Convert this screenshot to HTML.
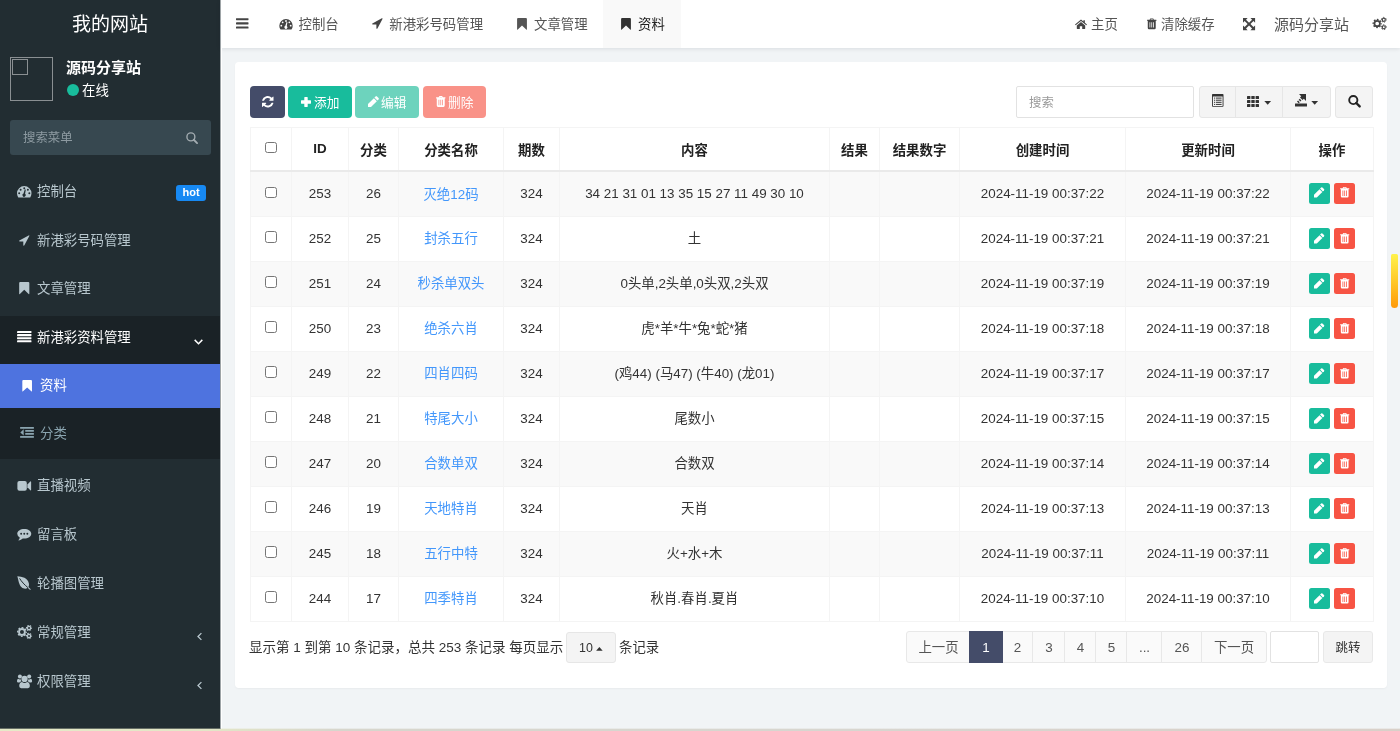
<!DOCTYPE html>
<html lang="zh-CN">
<head>
<meta charset="utf-8">
<title>我的网站</title>
<style>
*{box-sizing:border-box;}
html,body{margin:0;padding:0;}
body{width:1400px;height:731px;overflow:hidden;background:#f1f4f6;font-family:"Liberation Sans","Noto Sans CJK SC",sans-serif;font-size:13.4px;color:#333;position:relative;}
svg{display:block;position:absolute;overflow:visible;}
a{text-decoration:none;color:inherit;}
.abs{position:absolute;white-space:nowrap;}
#side{position:absolute;left:0;top:0;width:220px;height:729px;background:#222d32;color:#b8c7ce;}
#logo{position:absolute;left:0;top:0;width:220px;height:48px;line-height:50px;text-align:center;color:#fff;font-size:19px;}
#avatar{position:absolute;left:10px;top:57px;width:43px;height:44px;border:1px solid #8a8f92;}
#avatar i{position:absolute;left:1px;top:1px;width:16px;height:16px;border:1px solid #8a8f92;display:block;}
#msearch{position:absolute;left:10px;top:120px;width:201px;height:35px;background:#374850;border-radius:3px;color:#8d9aa1;font-size:12.4px;line-height:36px;padding-left:13px;}
.mi{position:absolute;left:0;width:220px;height:20px;line-height:20px;font-size:13.4px;white-space:nowrap;}
.mi span.t{position:absolute;left:37px;top:1px;}
.badge{position:absolute;left:176px;top:184.7px;width:30px;background:#1789f3;color:#fff;font-size:11px;font-weight:bold;line-height:15px;height:16px;text-align:center;border-radius:3px;}
#head{position:absolute;left:220px;top:0;width:1180px;height:48px;background:#fff;box-shadow:0 1px 4px rgba(0,21,41,.10);}
#head .tab{position:absolute;top:0;height:48px;line-height:49px;font-size:13.4px;color:#555;white-space:nowrap;}
#panel{position:absolute;left:235px;top:62px;width:1152px;height:626px;background:#fff;border-radius:4px;box-shadow:0 1px 2px rgba(0,0,0,.04);}
.btn{position:absolute;top:86px;height:32px;border-radius:4px;color:#fff;font-size:12.7px;line-height:35px;white-space:nowrap;}
table{position:absolute;left:250px;top:127px;width:1123px;border-collapse:collapse;table-layout:fixed;font-size:13.4px;}
th,td{border:1px solid #f4f4f4;text-align:center;padding:0;height:45px;white-space:nowrap;overflow:hidden;position:relative;}
th{height:43px;font-weight:bold;color:#222;border-bottom:2px solid #eaeaea;}
tbody tr:nth-child(odd){background:#f9f9f9;}
tbody tr:first-child td{height:46px;}
tbody tr:not(:first-child) td{padding-bottom:2px;}
.c{position:relative;top:-1px;}
td a.l{color:#4397fb;}
.cb{display:inline-block;width:11.5px;height:11.5px;border:1px solid #767676;border-radius:2.5px;background:#fff;vertical-align:middle;position:relative;top:-2px;}
.ob{position:absolute;top:11px;width:21px;height:21px;border-radius:2.5px;}
.tb{position:absolute;top:86px;height:32px;background:#f4f4f4;border:1px solid #e6e6e6;}
.pg{position:absolute;top:631px;height:32px;line-height:30px;border:1px solid #e8e8e8;background:#fafafa;color:#555;text-align:center;font-size:13.4px;}
</style>
</head>
<body>
<div id="root" style="position:absolute;left:0;top:0;width:1400px;height:731px;will-change:transform">
<div id="side">
<div id="logo">我的网站</div>
<div id="avatar"><i></i></div>
<div class="abs" style="left:66px;top:58px;color:#fff;font-weight:bold;font-size:15px;line-height:20px">源码分享站</div>
<div class="abs" style="left:67px;top:84px;width:12px;height:12px;border-radius:50%;background:#18bc9c"></div>
<div class="abs" style="left:82px;top:81px;color:#fff;font-size:13.4px;line-height:20px">在线</div>
<div id="msearch">搜索菜单<svg viewBox="0 0 13 13" width="12" height="12" fill="currentColor" style="color:#a3acb1;left:176px;top:11.7px"><circle cx="5.3" cy="5.3" r="4.3" fill="none" stroke="currentColor" stroke-width="1.5"/><path d="M8.4 8.4L12 12" stroke="currentColor" stroke-width="2.0" stroke-linecap="round"/></svg></div>
<div class="abs" style="left:0;top:316px;width:220px;height:143px;background:#1a2226"></div>
<div class="abs" style="left:0;top:363.5px;width:220px;height:44.5px;background:#4e73df"></div>
<div class="mi" style="top:181px;color:#b8c7ce"><svg viewBox="0 0 14 11" width="14.5" height="11.5" fill="#b8c7ce" style="left:16.8px;top:5px"><path fill-rule="evenodd" d="M0 7A7 7 0 0 1 14 7C14 8.4 13.6 9.7 12.9 10.7Q12.7 11 12.4 11H1.6Q1.3 11 1.1 10.7C.4 9.7 0 8.4 0 7zM1.15 7.00a0.95 0.95 0 1 0 1.90 0a0.95 0.95 0 1 0 -1.90 0zM2.55 3.50a0.95 0.95 0 1 0 1.90 0a0.95 0.95 0 1 0 -1.90 0zM6.05 2.10a0.95 0.95 0 1 0 1.90 0a0.95 0.95 0 1 0 -1.90 0zM9.55 3.50a0.95 0.95 0 1 0 1.90 0a0.95 0.95 0 1 0 -1.90 0zM10.95 7.00a0.95 0.95 0 1 0 1.90 0a0.95 0.95 0 1 0 -1.90 0zM6.3 7.2L7.6 3.2L8.5 3.5L7.8 7.4A1.6 1.6 0 1 1 6.3 7.2z"/></svg><span class="t" style="left:37px">控制台</span></div>
<div class="badge">hot</div>
<div class="mi" style="top:230px;color:#b8c7ce"><svg viewBox="0 0 11 11" width="10.5" height="11" fill="#b8c7ce" style="left:18.8px;top:4.5px"><path d="M10.8 .9L5.6 10.6Q5.3 11.1 4.9 10.9Q4.5 10.8 4.5 10.3V6.5H.7Q.2 6.5 .1 6.1Q0 5.7 .4 5.5L10.1 .2Q10.6 0 10.8 .3Q11 .5 10.8 .9z"/></svg><span class="t" style="left:37px">新港彩号码管理</span></div>
<div class="mi" style="top:278px;color:#b8c7ce"><svg viewBox="0 0 10 12" width="10.5" height="12.2" fill="#b8c7ce" style="left:19px;top:4px"><path d="M1 0H9Q10 0 10 1V11.4Q10 12.3 9.3 11.7L5 7.7L.7 11.7Q0 12.3 0 11.4V1Q0 0 1 0z"/></svg><span class="t" style="left:37px">文章管理</span></div>
<div class="mi" style="top:327px;color:#fff"><svg viewBox="0 0 14 11" width="14.5" height="11.3" fill="#fff" style="left:16.8px;top:4px"><rect x="0" y="0" width="14" height="2" rx=".4"/><rect x="0" y="3" width="14" height="2" rx=".4"/><rect x="0" y="6" width="14" height="2" rx=".4"/><rect x="0" y="9" width="14" height="2" rx=".4"/></svg><span class="t" style="left:37px">新港彩资料管理</span></div>
<svg viewBox="0 0 8 5" width="9" height="6" fill="currentColor" style="color:#fff;left:194px;top:339px"><path d="M.6 .6L4 4L7.4 .6" fill="none" stroke="currentColor" stroke-width="1.3"/></svg>
<div class="mi" style="top:375px;color:#fff"><svg viewBox="0 0 10 12" width="10.3" height="11.6" fill="#fff" style="left:22px;top:4.6px"><path d="M1 0H9Q10 0 10 1V11.4Q10 12.3 9.3 11.7L5 7.7L.7 11.7Q0 12.3 0 11.4V1Q0 0 1 0z"/></svg><span class="t" style="left:40px">资料</span></div>
<div class="mi" style="top:423px;color:#8aa4af"><svg viewBox="0 0 14 11" width="14" height="10.8" fill="#8aa4af" style="left:19.8px;top:4.4px"><rect x="0" y="0" width="14" height="1.8"/><rect x="5.2" y="3.05" width="8.8" height="1.8"/><rect x="5.2" y="6.1" width="8.8" height="1.8"/><rect x="0" y="9.2" width="14" height="1.8"/><path d="M3.6 2.4V8.6L.2 5.5z"/></svg><span class="t" style="left:40px">分类</span></div>
<div class="mi" style="top:475px;color:#b8c7ce"><svg viewBox="0 0 14 10" width="14.5" height="9.8" fill="#b8c7ce" style="left:16.8px;top:5.7px"><rect x="0" y="0" width="9.6" height="10" rx="2"/><path d="M10.2 3.6L13.2 .6Q14 0 14 1V9Q14 10 13.2 9.4L10.2 6.4z"/></svg><span class="t" style="left:37px">直播视频</span></div>
<div class="mi" style="top:524px;color:#b8c7ce"><svg viewBox="0 0 14 11.5" width="14.5" height="11.5" fill="#b8c7ce" style="left:16.8px;top:5.3px"><path fill-rule="evenodd" d="M7 0C10.9 0 14 2.1 14 4.8S10.9 9.6 7 9.6Q6.2 9.6 5.5 9.5Q3.8 11 1.6 11.4Q1.1 11.5 1.3 11.1Q2.3 10 2.5 8.5Q0 7.1 0 4.8C0 2.1 3.1 0 7 0zM2.95 4.80a0.95 0.95 0 1 0 1.90 0a0.95 0.95 0 1 0 -1.90 0zM6.05 4.80a0.95 0.95 0 1 0 1.90 0a0.95 0.95 0 1 0 -1.90 0zM9.15 4.80a0.95 0.95 0 1 0 1.90 0a0.95 0.95 0 1 0 -1.90 0z"/></svg><span class="t" style="left:37px">留言板</span></div>
<div class="mi" style="top:573px;color:#b8c7ce"><svg viewBox="0 0 14 14" width="14" height="14" fill="#b8c7ce" style="left:17px;top:2.7px"><path d="M.3 .2C5 .4 10.8 1.8 11.9 7.4C12.2 9 11.9 10.2 11.3 11.1L13.8 13.3L13.1 14L10.7 11.8C9 13.1 6.4 12.9 4.6 11.2C1.7 8.4 1.6 4 .3 .2z"/><path d="M2.6 2.4C4.5 5.6 7.3 8.6 10.9 11.6" stroke="#222d32" stroke-width="1" fill="none"/></svg><span class="t" style="left:37px">轮播图管理</span></div>
<div class="mi" style="top:622px;color:#b8c7ce"><svg viewBox="0 0 15.2 14" width="15.1" height="13.9" style="color:#b8c7ce;left:16.8px;top:3px"><circle cx="5" cy="7" r="2.95" fill="none" stroke="currentColor" stroke-width="1.9"/><circle cx="5" cy="7" r="4.3500000000000005" fill="none" stroke="currentColor" stroke-width="1.3" stroke-dasharray="1.900 1.516" stroke-dashoffset="0.950"/><circle cx="12.1" cy="3" r="1.625" fill="none" stroke="currentColor" stroke-width="1.25"/><circle cx="12.1" cy="3" r="2.5749999999999997" fill="none" stroke="currentColor" stroke-width="1.05" stroke-dasharray="1.600 1.097" stroke-dashoffset="0.800"/><circle cx="12.1" cy="11" r="1.625" fill="none" stroke="currentColor" stroke-width="1.25"/><circle cx="12.1" cy="11" r="2.5749999999999997" fill="none" stroke="currentColor" stroke-width="1.05" stroke-dasharray="1.600 1.097" stroke-dashoffset="0.800"/></svg><span class="t" style="left:37px">常规管理</span></div>
<svg viewBox="0 0 5 8" width="5" height="9" fill="currentColor" style="color:#b8c7ce;left:196.5px;top:631.5px"><path d="M4.4 .6L1 4L4.4 7.4" fill="none" stroke="currentColor" stroke-width="1.3"/></svg>
<div class="mi" style="top:671px;color:#b8c7ce"><svg viewBox="0 0 15 14" width="15.1" height="14.2" fill="#b8c7ce" style="left:16.8px;top:2.6px"><circle cx="7.5" cy="4.9" r="3.1"/><path d="M2.2 11.9C2.2 9.2 3.6 7.9 5 7.9Q6.1 8.9 7.5 8.9Q8.9 8.9 10 7.9C11.4 7.9 12.8 9.2 12.8 11.9Q12.8 14 10.9 14H4.1Q2.2 14 2.2 11.9z"/><circle cx="2.9" cy="2.4" r="2"/><circle cx="12.1" cy="2.4" r="2"/><path d="M0 7.3C0 5.5 .6 4.7 1.2 4.7Q2 5.3 2.9 5.3Q3.5 5.3 3.9 5.1Q3.8 6.3 4.4 7.3Q3.2 7.4 2.5 8.4H1.3Q0 8.4 0 7.3z"/><path d="M15 7.3C15 5.5 14.4 4.7 13.8 4.7Q13 5.3 12.1 5.3Q11.5 5.3 11.1 5.1Q11.2 6.3 10.6 7.3Q11.8 7.4 12.5 8.4H13.7Q15 8.4 15 7.3z"/></svg><span class="t" style="left:37px">权限管理</span></div>
<svg viewBox="0 0 5 8" width="5" height="9" fill="currentColor" style="color:#b8c7ce;left:196.5px;top:680.5px"><path d="M4.4 .6L1 4L4.4 7.4" fill="none" stroke="currentColor" stroke-width="1.3"/></svg>
</div>
<div id="head">
<svg viewBox="0 0 12 10" width="12.5" height="10.7" fill="#444" style="left:15.7px;top:17.9px"><rect x="0" y="0" width="12" height="2" rx=".4"/><rect x="0" y="4" width="12" height="2" rx=".4"/><rect x="0" y="8" width="12" height="2" rx=".4"/></svg>
<div class="tab" style="left:78.6px">控制台</div><svg viewBox="0 0 14 11" width="14" height="10.5" fill="#444" style="left:59.3px;top:19.2px"><path fill-rule="evenodd" d="M0 7A7 7 0 0 1 14 7C14 8.4 13.6 9.7 12.9 10.7Q12.7 11 12.4 11H1.6Q1.3 11 1.1 10.7C.4 9.7 0 8.4 0 7zM1.15 7.00a0.95 0.95 0 1 0 1.90 0a0.95 0.95 0 1 0 -1.90 0zM2.55 3.50a0.95 0.95 0 1 0 1.90 0a0.95 0.95 0 1 0 -1.90 0zM6.05 2.10a0.95 0.95 0 1 0 1.90 0a0.95 0.95 0 1 0 -1.90 0zM9.55 3.50a0.95 0.95 0 1 0 1.90 0a0.95 0.95 0 1 0 -1.90 0zM10.95 7.00a0.95 0.95 0 1 0 1.90 0a0.95 0.95 0 1 0 -1.90 0zM6.3 7.2L7.6 3.2L8.5 3.5L7.8 7.4A1.6 1.6 0 1 1 6.3 7.2z"/></svg>
<div class="tab" style="left:169.3px">新港彩号码管理</div><svg viewBox="0 0 11 11" width="10.7" height="11" fill="#444" style="left:151.8px;top:18px"><path d="M10.8 .9L5.6 10.6Q5.3 11.1 4.9 10.9Q4.5 10.8 4.5 10.3V6.5H.7Q.2 6.5 .1 6.1Q0 5.7 .4 5.5L10.1 .2Q10.6 0 10.8 .3Q11 .5 10.8 .9z"/></svg>
<div class="tab" style="left:314px">文章管理</div><svg viewBox="0 0 10 12" width="10" height="11.8" fill="#555" style="left:297px;top:17.5px"><path d="M1 0H9Q10 0 10 1V11.4Q10 12.3 9.3 11.7L5 7.7L.7 11.7Q0 12.3 0 11.4V1Q0 0 1 0z"/></svg>
<div class="tab" style="left:383px;width:78px;background:#f9f9f9"></div><div class="tab" style="left:418px;color:#222">资料</div><svg viewBox="0 0 10 12" width="10" height="11.8" fill="#333" style="left:401.2px;top:17.5px"><path d="M1 0H9Q10 0 10 1V11.4Q10 12.3 9.3 11.7L5 7.7L.7 11.7Q0 12.3 0 11.4V1Q0 0 1 0z"/></svg>
<div class="tab" style="left:871px">主页</div><svg viewBox="0 0 14 11" width="12" height="10.5" fill="#444" style="left:855px;top:18.9px"><path d="M7 0L0 5.8L.8 6.7L7 1.7L13.2 6.7L14 5.8L11.5 3.7V.8H9.8V2.3z"/><path d="M7 2.9L2.1 6.9V10.6Q2.1 11 2.6 11H5.6V7.7H8.4V11H11.4Q11.9 11 11.9 10.6V6.9z"/></svg>
<div class="tab" style="left:941px">清除缓存</div><svg viewBox="0 0 11 12.5" width="9.5" height="11.7" fill="#444" style="left:927px;top:17.7px"><path fill-rule="evenodd" d="M4.1 0H6.9Q7.3 0 7.5 .4L7.9 1.4H10.6Q11 1.4 11 1.8V2.3Q11 2.7 10.6 2.7H10.1V11Q10.1 12.5 8.7 12.5H2.3Q.9 12.5 .9 11V2.7H.4Q0 2.7 0 2.3V1.8Q0 1.4 .4 1.4H3.1L3.5 .4Q3.7 0 4.1 0zM4.3 .9L4.1 1.4H6.9L6.7 .9zM2.9 4.3H3.8V10.6H2.9z M5.05 4.3H5.95V10.6H5.05z M7.2 4.3H8.1V10.6H7.2z"/></svg>
<svg viewBox="0 0 12 12" width="12.1" height="12.2" fill="#444" style="left:1022.9px;top:17.7px"><path d="M0 0H4.6L3 1.6L6 4.6L9 1.6L7.4 0H12V4.6L10.4 3L7.4 6L10.4 9L12 7.4V12H7.4L9 10.4L6 7.4L3 10.4L4.6 12H0V7.4L1.6 9L4.6 6L1.6 3L0 4.6z"/></svg>
<div class="tab" style="left:1054px;font-size:15px">源码分享站</div>
<svg viewBox="0 0 15.2 14" width="15.2" height="13" style="color:#444;left:1152px;top:17px"><circle cx="5" cy="7" r="2.95" fill="none" stroke="currentColor" stroke-width="1.9"/><circle cx="5" cy="7" r="4.3500000000000005" fill="none" stroke="currentColor" stroke-width="1.3" stroke-dasharray="1.900 1.516" stroke-dashoffset="0.950"/><circle cx="12.1" cy="3" r="1.625" fill="none" stroke="currentColor" stroke-width="1.25"/><circle cx="12.1" cy="3" r="2.5749999999999997" fill="none" stroke="currentColor" stroke-width="1.05" stroke-dasharray="1.600 1.097" stroke-dashoffset="0.800"/><circle cx="12.1" cy="11" r="1.625" fill="none" stroke="currentColor" stroke-width="1.25"/><circle cx="12.1" cy="11" r="2.5749999999999997" fill="none" stroke="currentColor" stroke-width="1.05" stroke-dasharray="1.600 1.097" stroke-dashoffset="0.800"/></svg>
</div>
<div class="abs" style="left:220px;top:0;width:1px;height:729px;background:#9ea4a7;z-index:5"></div><div class="abs" style="left:221px;top:48px;width:1px;height:681px;background:#fff"></div>
<div id="panel"></div>
<div class="btn" style="left:250px;width:35px;background:#444c69"><svg viewBox="0 0 12 12" width="11.5" height="11.5" fill="#fff" style="left:11.5px;top:10px"><path d="M10.2 1.8L11.3 .7Q12 .2 12 1V4.6Q12 5 11.6 5H8Q7.2 5 7.7 4.3L8.8 3.2A4 4 0 0 0 2.3 4.4Q2.1 5 1.7 5H.4Q0 5 .1 4.5A6 6 0 0 1 10.2 1.8z"/><path d="M1.8 10.2L.7 11.3Q0 11.8 0 11V7.4Q0 7 .4 7H4Q4.8 7 4.3 7.7L3.2 8.8A4 4 0 0 0 9.7 7.6Q9.9 7 10.3 7H11.6Q12 7 11.9 7.5A6 6 0 0 1 1.8 10.2z"/></svg></div>
<div class="btn" style="left:288px;width:64px;background:#18bc9c"><svg viewBox="0 0 10 10" width="10" height="10" fill="#fff" style="left:13px;top:10.5px"><path d="M3.7 0H6.3Q6.7 0 6.7 .4V3.3H9.6Q10 3.3 10 3.7V6.3Q10 6.7 9.6 6.7H6.7V9.6Q6.7 10 6.3 10H3.7Q3.3 10 3.3 9.6V6.7H.4Q0 6.7 0 6.3V3.7Q0 3.3 .4 3.3H3.3V.4Q3.3 0 3.7 0z"/></svg><span class="abs" style="left:26px">添加</span></div>
<div class="btn" style="left:355px;width:64px;background:#6dd3bd"><svg viewBox="0 0 12 12" width="11" height="11" fill="#fff" style="left:13px;top:10px"><path d="M7 1.75L8.3 .45Q9 -.2 9.7 .45L11.55 2.3Q12.2 3 11.55 3.7L10.25 5z"/><path d="M6.4 2.35L9.65 5.6L3.25 12H0V8.75z"/></svg><span class="abs" style="left:26px">编辑</span></div>
<div class="btn" style="left:423px;width:63px;background:#f99288"><svg viewBox="0 0 11 12.5" width="9.5" height="11" fill="#fff" style="left:13px;top:10px"><path fill-rule="evenodd" d="M4.1 0H6.9Q7.3 0 7.5 .4L7.9 1.4H10.6Q11 1.4 11 1.8V2.3Q11 2.7 10.6 2.7H10.1V11Q10.1 12.5 8.7 12.5H2.3Q.9 12.5 .9 11V2.7H.4Q0 2.7 0 2.3V1.8Q0 1.4 .4 1.4H3.1L3.5 .4Q3.7 0 4.1 0zM4.3 .9L4.1 1.4H6.9L6.7 .9zM2.9 4.3H3.8V10.6H2.9z M5.05 4.3H5.95V10.6H5.05z M7.2 4.3H8.1V10.6H7.2z"/></svg><span class="abs" style="left:25px">删除</span></div>
<div class="abs" style="left:1016px;top:86px;width:178px;height:32px;border:1px solid #e2e2e2;border-radius:2px;background:#fff;color:#999;font-size:12.4px;line-height:32px;padding-left:12px">搜索</div>
<div class="tb" style="left:1199px;width:37px;border-radius:3px 0 0 3px"><svg viewBox="0 0 11.5 12.8" width="11.5" height="12.8" fill="#333" style="left:11.7px;top:7.2px"><path fill-rule="evenodd" d="M.8 0H10.7Q11.5 0 11.5 .8V12Q11.5 12.8 10.7 12.8H.8Q0 12.8 0 12V.8Q0 0 .8 0zM.9 2.4V11.9H10.6V2.4z"/><rect x="2" y="3.6" width="1.1" height="1"/><rect x="3.9" y="3.6" width="5.7" height="1"/><rect x="2" y="5.7" width="1.1" height="1"/><rect x="3.9" y="5.7" width="5.7" height="1"/><rect x="2" y="7.8" width="1.1" height="1"/><rect x="3.9" y="7.8" width="5.7" height="1"/><rect x="2" y="9.9" width="1.1" height="1"/><rect x="3.9" y="9.9" width="5.7" height="1"/></svg></div>
<div class="tb" style="left:1235px;width:48px;"><svg viewBox="0 0 12 11" width="12" height="11.1" fill="#333" style="left:11.2px;top:8.9px"><rect x="0" y="0" width="3.4" height="3" rx=".5"/><rect x="4.3" y="0" width="3.4" height="3" rx=".5"/><rect x="8.6" y="0" width="3.4" height="3" rx=".5"/><rect x="0" y="4" width="3.4" height="3" rx=".5"/><rect x="4.3" y="4" width="3.4" height="3" rx=".5"/><rect x="8.6" y="4" width="3.4" height="3" rx=".5"/><rect x="0" y="8" width="3.4" height="3" rx=".5"/><rect x="4.3" y="8" width="3.4" height="3" rx=".5"/><rect x="8.6" y="8" width="3.4" height="3" rx=".5"/></svg><svg viewBox="0 0 8 4.5" width="7.4" height="3.8" fill="#333" style="left:27.5px;top:14.2px"><path d="M0 0H8L4 4.5z"/></svg></div>
<div class="tb" style="left:1282px;width:49px;border-radius:0 3px 3px 0"><svg viewBox="0 0 12 12.5" width="12" height="12.5" fill="currentColor" style="color:#333;fill:#333;left:11.7px;top:7.4px"><rect x="0" y="9.4" width="12" height="3.1" rx=".3"/><path d="M4 0H11V7L8.8 4.8L7.6 6L5 3.4L6.2 2.2z"/><path d="M5.6 5.6L2.2 9" stroke="currentColor" stroke-width="2.4" stroke-dasharray="1.5 .9" fill="none"/></svg><svg viewBox="0 0 8 4.5" width="7.4" height="3.8" fill="#333" style="left:27.9px;top:14.2px"><path d="M0 0H8L4 4.5z"/></svg></div>
<div class="tb" style="left:1335px;width:38px;border-radius:3px"><svg viewBox="0 0 13 13" width="12.9" height="12.4" fill="currentColor" style="color:#222;left:12px;top:7.9px"><circle cx="5.3" cy="5.3" r="4.3" fill="none" stroke="currentColor" stroke-width="2"/><path d="M8.4 8.4L12 12" stroke="currentColor" stroke-width="2.5" stroke-linecap="round"/></svg></div>
<table><colgroup><col style="width:41px"><col style="width:57px"><col style="width:50px"><col style="width:105px"><col style="width:56px"><col style="width:270px"><col style="width:50px"><col style="width:80px"><col style="width:166px"><col style="width:165px"><col style="width:83px"></colgroup>
<thead><tr><th><span class="cb"></span></th><th>ID</th><th>分类</th><th>分类名称</th><th>期数</th><th>内容</th><th>结果</th><th>结果数字</th><th>创建时间</th><th>更新时间</th><th>操作</th></tr></thead><tbody>
<tr><td><span class="cb"></span></td><td>253</td><td>26</td><td><a class="l c">灭绝12码</a></td><td>324</td><td>34 21 31 01 13 35 15 27 11 49 30 10</td><td></td><td></td><td>2024-11-19 00:37:22</td><td>2024-11-19 00:37:22</td><td><span class="ob" style="left:18px;background:#18bc9c"><svg viewBox="0 0 12 12" width="10.4" height="10.6" fill="#fff" style="left:5.3px;top:4.8px"><path d="M7 1.75L8.3 .45Q9 -.2 9.7 .45L11.55 2.3Q12.2 3 11.55 3.7L10.25 5z"/><path d="M6.4 2.35L9.65 5.6L3.25 12H0V8.75z"/></svg></span><span class="ob" style="left:43px;background:#f75444"><svg viewBox="0 0 11 12.5" width="9.4" height="10.5" fill="#fff" style="left:5.8px;top:4.9px"><path fill-rule="evenodd" d="M4.1 0H6.9Q7.3 0 7.5 .4L7.9 1.4H10.6Q11 1.4 11 1.8V2.3Q11 2.7 10.6 2.7H10.1V11Q10.1 12.5 8.7 12.5H2.3Q.9 12.5 .9 11V2.7H.4Q0 2.7 0 2.3V1.8Q0 1.4 .4 1.4H3.1L3.5 .4Q3.7 0 4.1 0zM4.3 .9L4.1 1.4H6.9L6.7 .9zM2.9 4.3H3.8V10.6H2.9z M5.05 4.3H5.95V10.6H5.05z M7.2 4.3H8.1V10.6H7.2z"/></svg></span></td></tr>
<tr><td><span class="cb"></span></td><td>252</td><td>25</td><td><a class="l c">封杀五行</a></td><td>324</td><td><span class="c">土</span></td><td></td><td></td><td>2024-11-19 00:37:21</td><td>2024-11-19 00:37:21</td><td><span class="ob" style="left:18px;background:#18bc9c"><svg viewBox="0 0 12 12" width="10.4" height="10.6" fill="#fff" style="left:5.3px;top:4.8px"><path d="M7 1.75L8.3 .45Q9 -.2 9.7 .45L11.55 2.3Q12.2 3 11.55 3.7L10.25 5z"/><path d="M6.4 2.35L9.65 5.6L3.25 12H0V8.75z"/></svg></span><span class="ob" style="left:43px;background:#f75444"><svg viewBox="0 0 11 12.5" width="9.4" height="10.5" fill="#fff" style="left:5.8px;top:4.9px"><path fill-rule="evenodd" d="M4.1 0H6.9Q7.3 0 7.5 .4L7.9 1.4H10.6Q11 1.4 11 1.8V2.3Q11 2.7 10.6 2.7H10.1V11Q10.1 12.5 8.7 12.5H2.3Q.9 12.5 .9 11V2.7H.4Q0 2.7 0 2.3V1.8Q0 1.4 .4 1.4H3.1L3.5 .4Q3.7 0 4.1 0zM4.3 .9L4.1 1.4H6.9L6.7 .9zM2.9 4.3H3.8V10.6H2.9z M5.05 4.3H5.95V10.6H5.05z M7.2 4.3H8.1V10.6H7.2z"/></svg></span></td></tr>
<tr><td><span class="cb"></span></td><td>251</td><td>24</td><td><a class="l c">秒杀单双头</a></td><td>324</td><td><span class="c">0头单,2头单,0头双,2头双</span></td><td></td><td></td><td>2024-11-19 00:37:19</td><td>2024-11-19 00:37:19</td><td><span class="ob" style="left:18px;background:#18bc9c"><svg viewBox="0 0 12 12" width="10.4" height="10.6" fill="#fff" style="left:5.3px;top:4.8px"><path d="M7 1.75L8.3 .45Q9 -.2 9.7 .45L11.55 2.3Q12.2 3 11.55 3.7L10.25 5z"/><path d="M6.4 2.35L9.65 5.6L3.25 12H0V8.75z"/></svg></span><span class="ob" style="left:43px;background:#f75444"><svg viewBox="0 0 11 12.5" width="9.4" height="10.5" fill="#fff" style="left:5.8px;top:4.9px"><path fill-rule="evenodd" d="M4.1 0H6.9Q7.3 0 7.5 .4L7.9 1.4H10.6Q11 1.4 11 1.8V2.3Q11 2.7 10.6 2.7H10.1V11Q10.1 12.5 8.7 12.5H2.3Q.9 12.5 .9 11V2.7H.4Q0 2.7 0 2.3V1.8Q0 1.4 .4 1.4H3.1L3.5 .4Q3.7 0 4.1 0zM4.3 .9L4.1 1.4H6.9L6.7 .9zM2.9 4.3H3.8V10.6H2.9z M5.05 4.3H5.95V10.6H5.05z M7.2 4.3H8.1V10.6H7.2z"/></svg></span></td></tr>
<tr><td><span class="cb"></span></td><td>250</td><td>23</td><td><a class="l c">绝杀六肖</a></td><td>324</td><td><span class="c">虎*羊*牛*兔*蛇*猪</span></td><td></td><td></td><td>2024-11-19 00:37:18</td><td>2024-11-19 00:37:18</td><td><span class="ob" style="left:18px;background:#18bc9c"><svg viewBox="0 0 12 12" width="10.4" height="10.6" fill="#fff" style="left:5.3px;top:4.8px"><path d="M7 1.75L8.3 .45Q9 -.2 9.7 .45L11.55 2.3Q12.2 3 11.55 3.7L10.25 5z"/><path d="M6.4 2.35L9.65 5.6L3.25 12H0V8.75z"/></svg></span><span class="ob" style="left:43px;background:#f75444"><svg viewBox="0 0 11 12.5" width="9.4" height="10.5" fill="#fff" style="left:5.8px;top:4.9px"><path fill-rule="evenodd" d="M4.1 0H6.9Q7.3 0 7.5 .4L7.9 1.4H10.6Q11 1.4 11 1.8V2.3Q11 2.7 10.6 2.7H10.1V11Q10.1 12.5 8.7 12.5H2.3Q.9 12.5 .9 11V2.7H.4Q0 2.7 0 2.3V1.8Q0 1.4 .4 1.4H3.1L3.5 .4Q3.7 0 4.1 0zM4.3 .9L4.1 1.4H6.9L6.7 .9zM2.9 4.3H3.8V10.6H2.9z M5.05 4.3H5.95V10.6H5.05z M7.2 4.3H8.1V10.6H7.2z"/></svg></span></td></tr>
<tr><td><span class="cb"></span></td><td>249</td><td>22</td><td><a class="l c">四肖四码</a></td><td>324</td><td><span class="c">(鸡44) (马47) (牛40) (龙01)</span></td><td></td><td></td><td>2024-11-19 00:37:17</td><td>2024-11-19 00:37:17</td><td><span class="ob" style="left:18px;background:#18bc9c"><svg viewBox="0 0 12 12" width="10.4" height="10.6" fill="#fff" style="left:5.3px;top:4.8px"><path d="M7 1.75L8.3 .45Q9 -.2 9.7 .45L11.55 2.3Q12.2 3 11.55 3.7L10.25 5z"/><path d="M6.4 2.35L9.65 5.6L3.25 12H0V8.75z"/></svg></span><span class="ob" style="left:43px;background:#f75444"><svg viewBox="0 0 11 12.5" width="9.4" height="10.5" fill="#fff" style="left:5.8px;top:4.9px"><path fill-rule="evenodd" d="M4.1 0H6.9Q7.3 0 7.5 .4L7.9 1.4H10.6Q11 1.4 11 1.8V2.3Q11 2.7 10.6 2.7H10.1V11Q10.1 12.5 8.7 12.5H2.3Q.9 12.5 .9 11V2.7H.4Q0 2.7 0 2.3V1.8Q0 1.4 .4 1.4H3.1L3.5 .4Q3.7 0 4.1 0zM4.3 .9L4.1 1.4H6.9L6.7 .9zM2.9 4.3H3.8V10.6H2.9z M5.05 4.3H5.95V10.6H5.05z M7.2 4.3H8.1V10.6H7.2z"/></svg></span></td></tr>
<tr><td><span class="cb"></span></td><td>248</td><td>21</td><td><a class="l c">特尾大小</a></td><td>324</td><td><span class="c">尾数小</span></td><td></td><td></td><td>2024-11-19 00:37:15</td><td>2024-11-19 00:37:15</td><td><span class="ob" style="left:18px;background:#18bc9c"><svg viewBox="0 0 12 12" width="10.4" height="10.6" fill="#fff" style="left:5.3px;top:4.8px"><path d="M7 1.75L8.3 .45Q9 -.2 9.7 .45L11.55 2.3Q12.2 3 11.55 3.7L10.25 5z"/><path d="M6.4 2.35L9.65 5.6L3.25 12H0V8.75z"/></svg></span><span class="ob" style="left:43px;background:#f75444"><svg viewBox="0 0 11 12.5" width="9.4" height="10.5" fill="#fff" style="left:5.8px;top:4.9px"><path fill-rule="evenodd" d="M4.1 0H6.9Q7.3 0 7.5 .4L7.9 1.4H10.6Q11 1.4 11 1.8V2.3Q11 2.7 10.6 2.7H10.1V11Q10.1 12.5 8.7 12.5H2.3Q.9 12.5 .9 11V2.7H.4Q0 2.7 0 2.3V1.8Q0 1.4 .4 1.4H3.1L3.5 .4Q3.7 0 4.1 0zM4.3 .9L4.1 1.4H6.9L6.7 .9zM2.9 4.3H3.8V10.6H2.9z M5.05 4.3H5.95V10.6H5.05z M7.2 4.3H8.1V10.6H7.2z"/></svg></span></td></tr>
<tr><td><span class="cb"></span></td><td>247</td><td>20</td><td><a class="l c">合数单双</a></td><td>324</td><td><span class="c">合数双</span></td><td></td><td></td><td>2024-11-19 00:37:14</td><td>2024-11-19 00:37:14</td><td><span class="ob" style="left:18px;background:#18bc9c"><svg viewBox="0 0 12 12" width="10.4" height="10.6" fill="#fff" style="left:5.3px;top:4.8px"><path d="M7 1.75L8.3 .45Q9 -.2 9.7 .45L11.55 2.3Q12.2 3 11.55 3.7L10.25 5z"/><path d="M6.4 2.35L9.65 5.6L3.25 12H0V8.75z"/></svg></span><span class="ob" style="left:43px;background:#f75444"><svg viewBox="0 0 11 12.5" width="9.4" height="10.5" fill="#fff" style="left:5.8px;top:4.9px"><path fill-rule="evenodd" d="M4.1 0H6.9Q7.3 0 7.5 .4L7.9 1.4H10.6Q11 1.4 11 1.8V2.3Q11 2.7 10.6 2.7H10.1V11Q10.1 12.5 8.7 12.5H2.3Q.9 12.5 .9 11V2.7H.4Q0 2.7 0 2.3V1.8Q0 1.4 .4 1.4H3.1L3.5 .4Q3.7 0 4.1 0zM4.3 .9L4.1 1.4H6.9L6.7 .9zM2.9 4.3H3.8V10.6H2.9z M5.05 4.3H5.95V10.6H5.05z M7.2 4.3H8.1V10.6H7.2z"/></svg></span></td></tr>
<tr><td><span class="cb"></span></td><td>246</td><td>19</td><td><a class="l c">天地特肖</a></td><td>324</td><td><span class="c">天肖</span></td><td></td><td></td><td>2024-11-19 00:37:13</td><td>2024-11-19 00:37:13</td><td><span class="ob" style="left:18px;background:#18bc9c"><svg viewBox="0 0 12 12" width="10.4" height="10.6" fill="#fff" style="left:5.3px;top:4.8px"><path d="M7 1.75L8.3 .45Q9 -.2 9.7 .45L11.55 2.3Q12.2 3 11.55 3.7L10.25 5z"/><path d="M6.4 2.35L9.65 5.6L3.25 12H0V8.75z"/></svg></span><span class="ob" style="left:43px;background:#f75444"><svg viewBox="0 0 11 12.5" width="9.4" height="10.5" fill="#fff" style="left:5.8px;top:4.9px"><path fill-rule="evenodd" d="M4.1 0H6.9Q7.3 0 7.5 .4L7.9 1.4H10.6Q11 1.4 11 1.8V2.3Q11 2.7 10.6 2.7H10.1V11Q10.1 12.5 8.7 12.5H2.3Q.9 12.5 .9 11V2.7H.4Q0 2.7 0 2.3V1.8Q0 1.4 .4 1.4H3.1L3.5 .4Q3.7 0 4.1 0zM4.3 .9L4.1 1.4H6.9L6.7 .9zM2.9 4.3H3.8V10.6H2.9z M5.05 4.3H5.95V10.6H5.05z M7.2 4.3H8.1V10.6H7.2z"/></svg></span></td></tr>
<tr><td><span class="cb"></span></td><td>245</td><td>18</td><td><a class="l c">五行中特</a></td><td>324</td><td><span class="c">火+水+木</span></td><td></td><td></td><td>2024-11-19 00:37:11</td><td>2024-11-19 00:37:11</td><td><span class="ob" style="left:18px;background:#18bc9c"><svg viewBox="0 0 12 12" width="10.4" height="10.6" fill="#fff" style="left:5.3px;top:4.8px"><path d="M7 1.75L8.3 .45Q9 -.2 9.7 .45L11.55 2.3Q12.2 3 11.55 3.7L10.25 5z"/><path d="M6.4 2.35L9.65 5.6L3.25 12H0V8.75z"/></svg></span><span class="ob" style="left:43px;background:#f75444"><svg viewBox="0 0 11 12.5" width="9.4" height="10.5" fill="#fff" style="left:5.8px;top:4.9px"><path fill-rule="evenodd" d="M4.1 0H6.9Q7.3 0 7.5 .4L7.9 1.4H10.6Q11 1.4 11 1.8V2.3Q11 2.7 10.6 2.7H10.1V11Q10.1 12.5 8.7 12.5H2.3Q.9 12.5 .9 11V2.7H.4Q0 2.7 0 2.3V1.8Q0 1.4 .4 1.4H3.1L3.5 .4Q3.7 0 4.1 0zM4.3 .9L4.1 1.4H6.9L6.7 .9zM2.9 4.3H3.8V10.6H2.9z M5.05 4.3H5.95V10.6H5.05z M7.2 4.3H8.1V10.6H7.2z"/></svg></span></td></tr>
<tr><td><span class="cb"></span></td><td>244</td><td>17</td><td><a class="l c">四季特肖</a></td><td>324</td><td><span class="c">秋肖.春肖.夏肖</span></td><td></td><td></td><td>2024-11-19 00:37:10</td><td>2024-11-19 00:37:10</td><td><span class="ob" style="left:18px;background:#18bc9c"><svg viewBox="0 0 12 12" width="10.4" height="10.6" fill="#fff" style="left:5.3px;top:4.8px"><path d="M7 1.75L8.3 .45Q9 -.2 9.7 .45L11.55 2.3Q12.2 3 11.55 3.7L10.25 5z"/><path d="M6.4 2.35L9.65 5.6L3.25 12H0V8.75z"/></svg></span><span class="ob" style="left:43px;background:#f75444"><svg viewBox="0 0 11 12.5" width="9.4" height="10.5" fill="#fff" style="left:5.8px;top:4.9px"><path fill-rule="evenodd" d="M4.1 0H6.9Q7.3 0 7.5 .4L7.9 1.4H10.6Q11 1.4 11 1.8V2.3Q11 2.7 10.6 2.7H10.1V11Q10.1 12.5 8.7 12.5H2.3Q.9 12.5 .9 11V2.7H.4Q0 2.7 0 2.3V1.8Q0 1.4 .4 1.4H3.1L3.5 .4Q3.7 0 4.1 0zM4.3 .9L4.1 1.4H6.9L6.7 .9zM2.9 4.3H3.8V10.6H2.9z M5.05 4.3H5.95V10.6H5.05z M7.2 4.3H8.1V10.6H7.2z"/></svg></span></td></tr>
</tbody></table>
<div class="abs" style="left:249px;top:638px;line-height:20px;color:#333;font-size:13.5px">显示第 1 到第 10 条记录，总共 253 条记录 每页显示</div>
<div class="abs" style="left:566px;top:632px;width:50px;height:31px;border:1px solid #e6e6e6;border-radius:3px;background:#f4f4f4;font-size:12.4px;line-height:30px;padding-left:12px;color:#333">10<svg viewBox="0 0 8 4.5" width="6.8" height="3.7" fill="#333" style="left:28.6px;top:13.6px"><path d="M0 4.5H8L4 0z"/></svg></div>
<div class="abs" style="left:619px;top:638px;line-height:20px;color:#333">条记录</div>
<div class="pg" style="left:906px;width:65px;border-radius:3px 0 0 3px;line-height:32px;">上一页</div>
<div class="pg" style="left:969px;width:34px;background:#444c69;color:#fff;border-color:#444c69;z-index:2;line-height:31px;">1</div>
<div class="pg" style="left:1001px;width:33px;line-height:31px;">2</div>
<div class="pg" style="left:1032px;width:34px;line-height:31px;">3</div>
<div class="pg" style="left:1064px;width:33px;line-height:31px;">4</div>
<div class="pg" style="left:1095px;width:33px;line-height:31px;">5</div>
<div class="pg" style="left:1126px;width:37px;line-height:31px;">...</div>
<div class="pg" style="left:1161px;width:42px;line-height:31px;">26</div>
<div class="pg" style="left:1201px;width:66px;line-height:32px;border-radius:0 3px 3px 0;">下一页</div>
<div class="abs" style="left:1270px;top:631px;width:49px;height:32px;border:1px solid #e2e2e2;border-radius:2px;background:#fff"></div>
<div class="pg" style="left:1323px;width:50px;border-radius:3px;background:#f4f4f4;font-size:12.4px;color:#333;line-height:33px">跳转</div>
<div class="abs" style="left:1391px;top:254px;width:7px;height:54px;border-radius:1.5px 1.5px 3.5px 3.5px;background:linear-gradient(#fff24c,#ffc928 50%,#ff9a0a)"></div>
<div class="abs" style="left:0;top:728px;width:1400px;height:3px;background:linear-gradient(90deg,#e6eac8 0,#e3e6c7 15%,#d7d6cd 24%,#d8d6d0 60%,#d9d0c9 100%);opacity:.35"></div><div class="abs" style="left:0;top:729px;width:1400px;height:2px;background:linear-gradient(90deg,#e6eac8 0,#e3e6c7 15%,#d7d6cd 24%,#d8d6d0 60%,#d9d0c9 100%)"></div>
</div>
</body>
</html>
